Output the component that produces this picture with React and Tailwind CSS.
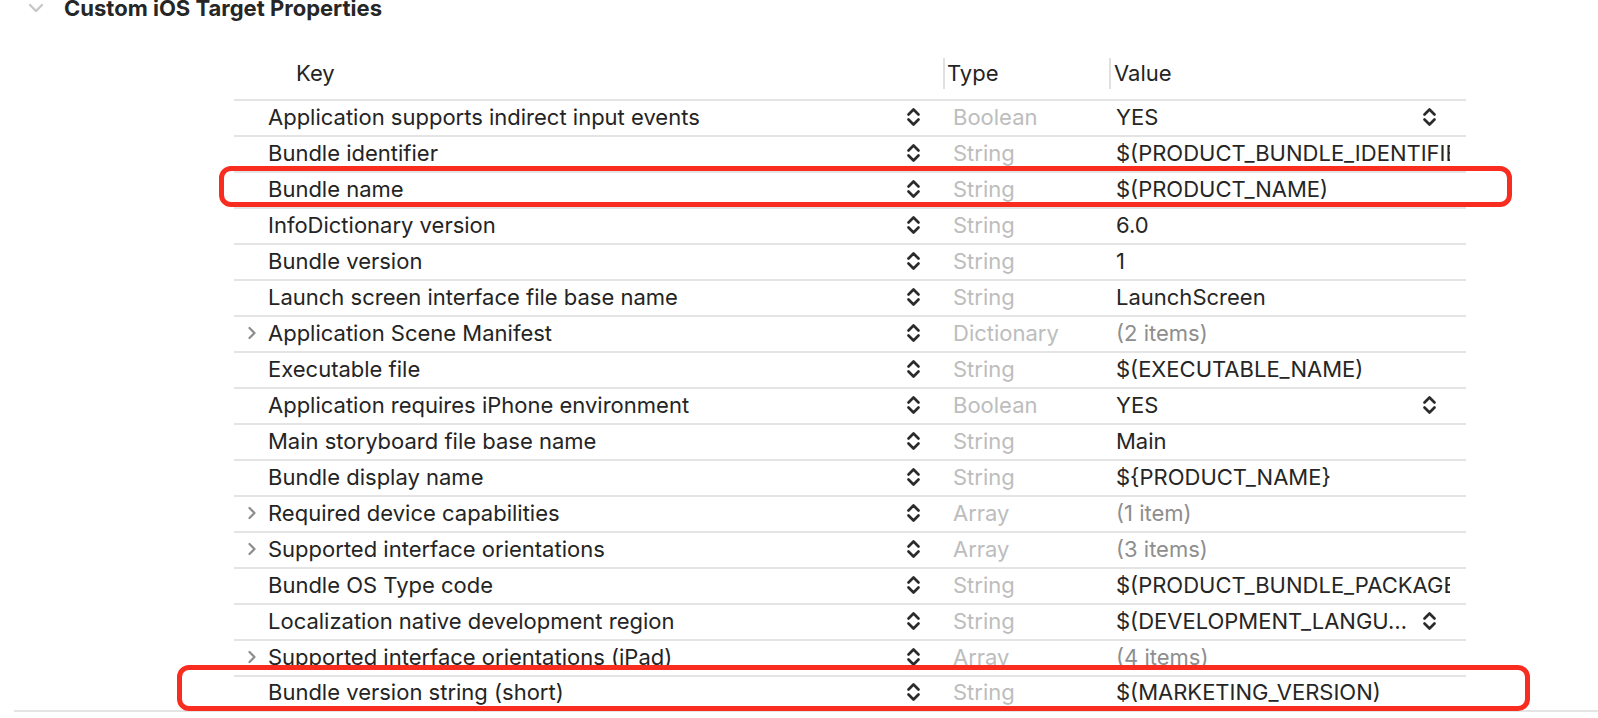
import React from 'react';

const rows = [
  { key: 'Application supports indirect input events', type: 'Boolean', value: 'YES', stepper: true },
  { key: 'Bundle identifier', type: 'String', value: '$(PRODUCT_BUNDLE_IDENTIFIER)' },
  { key: 'Bundle name', type: 'String', value: '$(PRODUCT_NAME)' },
  { key: 'InfoDictionary version', type: 'String', value: '6.0' },
  { key: 'Bundle version', type: 'String', value: '1' },
  { key: 'Launch screen interface file base name', type: 'String', value: 'LaunchScreen' },
  { key: 'Application Scene Manifest', type: 'Dictionary', value: '(2 items)', group: true },
  { key: 'Executable file', type: 'String', value: '$(EXECUTABLE_NAME)' },
  { key: 'Application requires iPhone environment', type: 'Boolean', value: 'YES', stepper: true },
  { key: 'Main storyboard file base name', type: 'String', value: 'Main' },
  { key: 'Bundle display name', type: 'String', value: '${PRODUCT_NAME}' },
  { key: 'Required device capabilities', type: 'Array', value: '(1 item)', group: true },
  { key: 'Supported interface orientations', type: 'Array', value: '(3 items)', group: true },
  { key: 'Bundle OS Type code', type: 'String', value: '$(PRODUCT_BUNDLE_PACKAGE_TYPE)' },
  { key: 'Localization native development region', type: 'String', value: '$(DEVELOPMENT_LANGU…', stepper: true },
  { key: 'Supported interface orientations (iPad)', type: 'Array', value: '(4 items)', group: true },
  { key: 'Bundle version string (short)', type: 'String', value: '$(MARKETING_VERSION)' },
];

function Stepper() {
  return (
    <svg width="15" height="22" viewBox="0 0 15 22" fill="none" stroke="#2b2b2b" strokeWidth="2.7" strokeLinecap="round" strokeLinejoin="round">
      <path d="M2.5 8.5 L7.5 3.5 L12.5 8.5" />
      <path d="M2.5 13.5 L7.5 18.5 L12.5 13.5" />
    </svg>
  );
}

function Row({ row, last }) {
  return (
    <div className={`flex items-center border-t-2 border-[#e4e4e4] pb-[3px] ${last ? 'h-[35px]' : 'h-[36px]'}`}>
      <div className="w-[34px] h-full flex items-center pl-[13px]">
        {row.group && (
          <svg width="10" height="14" viewBox="0 0 10 14" fill="none" stroke="#8c8c8c" strokeWidth="2.2" strokeLinecap="round" strokeLinejoin="round">
            <path d="M2.5 2 L7.5 7 L2.5 12" />
          </svg>
        )}
      </div>
      <div className="w-[639px] text-[22px] leading-[26px] text-[#242424] whitespace-nowrap overflow-hidden">{row.key}</div>
      <div className="w-[15px] shrink-0 -ml-[1px]"><Stepper /></div>
      <div className="w-[32px]" />
      <div className="w-[163px] text-[22px] leading-[26px] text-[#bdbdbd] whitespace-nowrap">{row.type}</div>
      <div className="w-[334px] flex items-center">
        <div className={`flex-1 min-w-0 overflow-hidden whitespace-nowrap text-[22px] leading-[26px] ${row.group ? 'text-[#8e8e8e]' : 'text-[#262626]'}`}>
          {row.value}
        </div>
        {row.stepper && (
          <div className="shrink-0 ml-[6px] mr-[13px]"><Stepper /></div>
        )}
      </div>
      <div className="w-[16px]" />
    </div>
  );
}

export default function App() {
  return (
    <div className="relative w-[1598px] h-[718px] bg-white overflow-hidden" style={{ fontFamily: 'Inter, "Noto Sans", sans-serif' }}>
      <div className="h-[22px] -mt-[3px] flex items-center">
        <svg className="ml-[28px]" width="16" height="10" viewBox="0 0 16 10" fill="none" stroke="#c8c8c8" strokeWidth="2.4" strokeLinecap="round" strokeLinejoin="round">
          <path d="M2 2 L8 8 L14 2" />
        </svg>
        <h2 className="ml-[20px] text-[22px] leading-[26px] font-bold text-[#262626] whitespace-nowrap">Custom iOS Target Properties</h2>
      </div>

      <div className="ml-[234px] w-[1232px] mt-[36px]">
        <div className="h-[36px] flex items-center text-[22px] leading-[26px] text-[#242424]">
          <div className="w-[709px] pl-[62px]">Key</div>
          <div className="w-[2px] h-[31px] bg-[#e0e0e0]" />
          <div className="w-[164px] pl-[2px]">Type</div>
          <div className="w-[2px] h-[31px] bg-[#e0e0e0]" />
          <div className="pl-[3px]">Value</div>
        </div>
        <div className="mt-[8px]">
          {rows.map((row, i) => (
            <Row key={row.key} row={row} last={i === rows.length - 1} />
          ))}
        </div>
      </div>
      <div className="ml-[14px] h-[2px] bg-[#e4e4e4]" />

      {/* red annotation boxes */}
      <div className="absolute left-[219px] top-[166px] w-[1293px] h-[41px] border-[5px] border-[#f92c20] rounded-[12px]" />
      <div className="absolute left-[177px] top-[665px] w-[1353px] h-[46px] border-[5px] border-[#f92c20] rounded-[12px]" />
    </div>
  );
}
